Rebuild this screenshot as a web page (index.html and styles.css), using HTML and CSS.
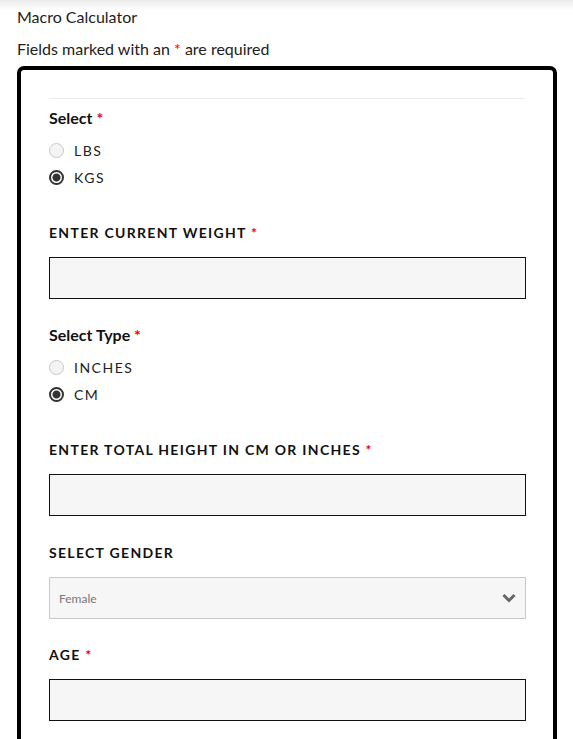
FILE: index.html
```html
<!DOCTYPE html>
<html lang="en">
<head>
  <meta charset="UTF-8">
  <meta name="viewport" content="width=device-width, initial-scale=1.0">
  <title>Macro Calculator</title>
  <link rel="stylesheet" href="styles.css">
</head>
<body>

  <p class="page-title">Macro Calculator</p>
  <p class="required-note">Fields marked with an <span class="req">*</span> are required</p>

  <form class="calc-card">
    <div class="divider"></div>

    <!-- weight unit -->
    <div class="field radio-field">
      <div class="field-title">Select <span class="req">*</span></div>
      <label class="radio-row"><input type="radio" name="unit" value="lbs"> <span>LBS</span></label>
      <label class="radio-row"><input type="radio" name="unit" value="kgs" checked> <span>KGS</span></label>
    </div>

    <div class="field">
      <label class="field-label" for="weight">ENTER CURRENT WEIGHT <span class="req">*</span></label>
      <input type="text" id="weight" class="text-input">
    </div>

    <!-- height unit -->
    <div class="field radio-field">
      <div class="field-title">Select Type <span class="req">*</span></div>
      <label class="radio-row"><input type="radio" name="htype" value="inches"> <span>INCHES</span></label>
      <label class="radio-row"><input type="radio" name="htype" value="cm" checked> <span>CM</span></label>
    </div>

    <div class="field field-wide">
      <label class="field-label" for="height">ENTER TOTAL HEIGHT IN CM OR INCHES <span class="req">*</span></label>
      <input type="text" id="height" class="text-input">
    </div>

    <div class="field">
      <label class="field-label" for="gender">SELECT GENDER</label>
      <div class="select-wrap">
        <select id="gender" class="select-input">
          <option>Female</option>
          <option>Male</option>
        </select>
        <svg class="chevron" width="14" height="10" viewBox="0 0 14 10">
          <path d="M1.5 2 L7 7.5 L12.5 2" fill="none" stroke="#666" stroke-width="3"/>
        </svg>
      </div>
    </div>

    <div class="field">
      <label class="field-label" for="age">AGE <span class="req">*</span></label>
      <input type="text" id="age" class="text-input">
    </div>
  </form>

</body>
</html>
```

FILE: styles.css
```css
body {
  font-family: Lato, "Open Sans", Arial, sans-serif;
  color: #222;
  margin: 0;
  padding: 5px 16px 40px 17px;
  background: linear-gradient(#ebebeb, #fff 10px) no-repeat;
}
.page-title {
  margin: 0;
  font-size: 16px;
  line-height: 24px;
}
.required-note {
  margin: 8px 0 5px;
  font-size: 16px;
  line-height: 24px;
}
.req {
  color: #e00;
}
.calc-card {
  width: 476px;
  border: 4px solid #000;
  border-radius: 7px;
  padding: 28px;
  background-color: #fff;
}
.divider {
  height: 1px;
  background-color: #ebebeb;
  margin-bottom: 9px;
}
.field {
  margin-bottom: 26px;
}
.field-wide {
  margin-bottom: 27px;
}
.radio-field {
  margin-bottom: 32px;
}
.field-title {
  font-size: 16px;
  font-weight: bold;
  line-height: 20px;
  color: #111;
  margin-bottom: 9px;
}
.radio-row {
  display: flex;
  align-items: center;
  height: 27px;
  font-size: 14px;
  letter-spacing: 1.5px;
  color: #222;
}
.radio-row input {
  appearance: none;
  -webkit-appearance: none;
  width: 15px;
  height: 15px;
  margin: 0 10px 0 0;
  border: 1px solid #c8c8c8;
  border-radius: 50%;
  background-color: #f4f4f4;
}
.radio-row input:checked {
  border: 2px solid #333;
  background: radial-gradient(circle, #333 0 3.5px, #fff 4.5px);
}
.field-label {
  display: block;
  font-size: 14px;
  font-weight: bold;
  line-height: 20px;
  letter-spacing: 1.3px;
  color: #111;
  margin-bottom: 14px;
}
.text-input {
  display: block;
  box-sizing: border-box;
  width: 477px;
  height: 42px;
  border: 1px solid #111;
  background-color: #f6f6f6;
  padding: 0 10px;
  font-size: 14px;
}
.select-wrap {
  position: relative;
}
.select-input {
  display: block;
  box-sizing: border-box;
  width: 477px;
  height: 42px;
  border: 1px solid #c8c8c8;
  background-color: #f6f6f6;
  appearance: none;
  -webkit-appearance: none;
  padding: 0 9px;
  font-family: Lato, "Open Sans", Arial, sans-serif;
  font-size: 12px;
  color: #777;
  border-radius: 0;
}
.chevron {
  position: absolute;
  right: 9px;
  top: 16px;
  pointer-events: none;
}
```
